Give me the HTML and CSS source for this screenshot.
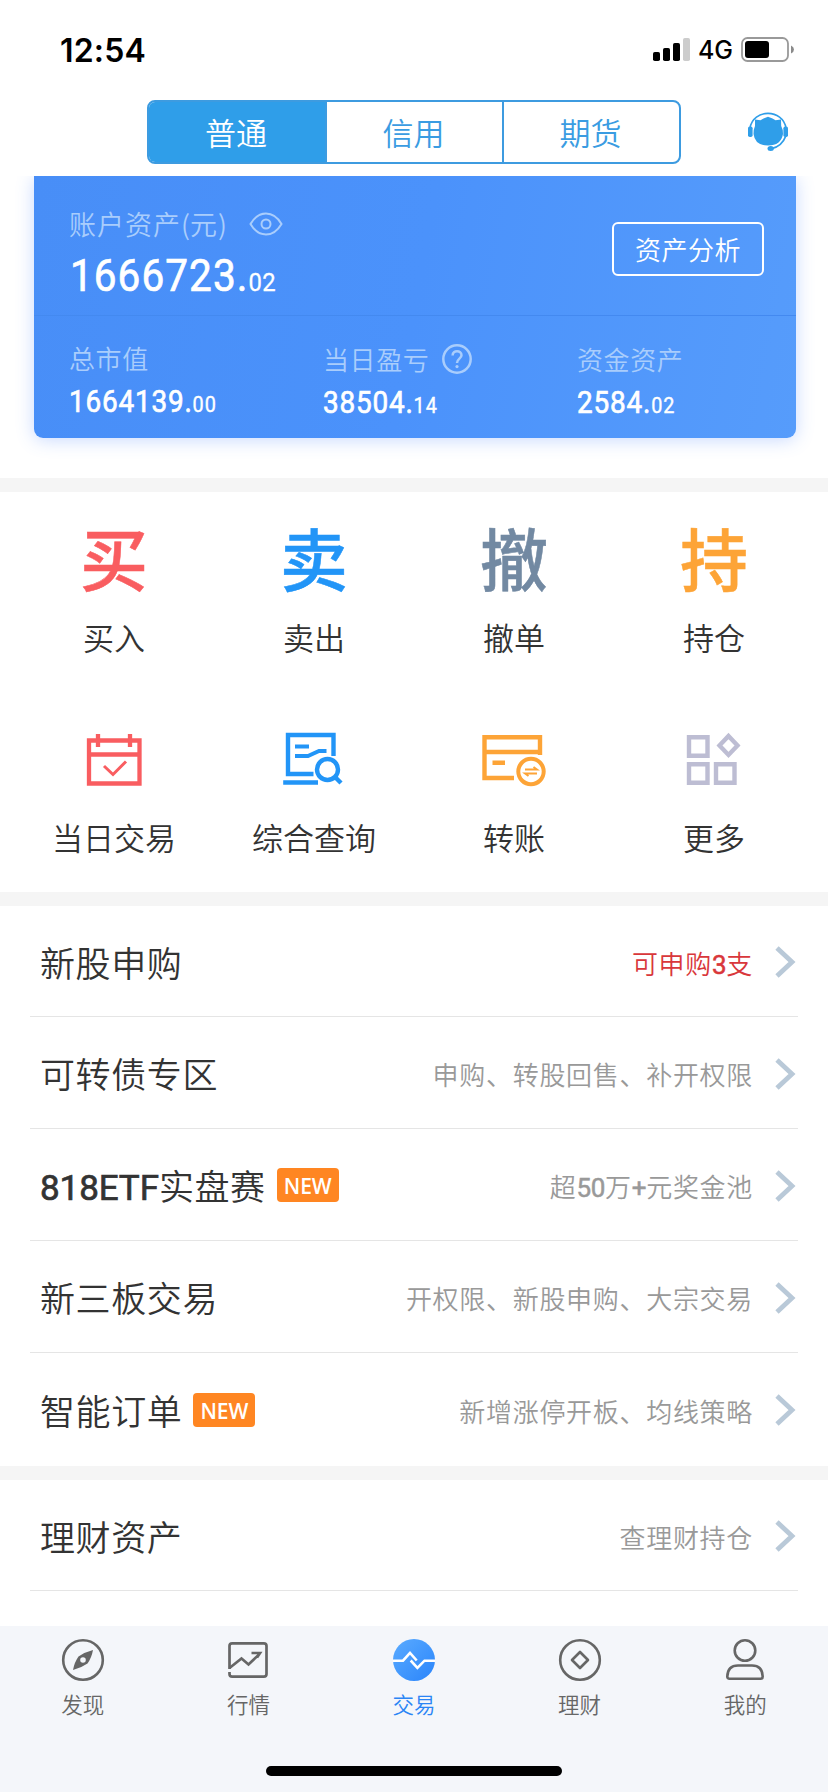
FILE: index.html
```html
<!DOCTYPE html>
<html lang="zh-CN">
<head>
<meta charset="utf-8">
<title>交易</title>
<link rel="stylesheet" href="styles.css">
</head>
<body>
<svg width="0" height="0" class="defs">
  <symbol id="chevron" viewBox="0 0 22 34"><path d="M3 3L18 17L3 31" fill="none" stroke="#b9c9d8" stroke-width="4.800"/></symbol>
</svg>
<div class="screen">
  <header class="status">
    <span class="time">12:54</span>
    <span class="status-right">
      <svg width="38" height="24" viewBox="0 0 38 24">
        <rect x="0" y="14" width="7" height="9" rx="1.8"/><rect x="10" y="10" width="7" height="13" rx="1.8"/><rect x="20" y="5" width="7" height="18" rx="1.8"/><rect x="30" y="0" width="7" height="23" rx="1.8" fill="#ccc"/>
      </svg>
      <span class="net">4G</span>
      <svg class="battery" width="54" height="26" viewBox="0 0 54 26">
        <rect x="1" y="1" width="46" height="23" rx="5.5" fill="none" stroke="#999" stroke-width="1.8"/><rect x="4" y="4" width="24" height="17" rx="3"/><path d="M50 8.500q3 1.300 3 4t-3 4z" fill="#8a8a8a"/>
      </svg>
    </span>
  </header>
  <nav class="top">
    <div class="segments">
      <span class="seg on">普通</span><span class="seg">信用</span><span class="seg">期货</span>
    </div>
    <svg class="service" width="42" height="40" viewBox="0 0 42 40">
      <path d="M3 16C6 -3.500 36 -3.500 39 16" fill="none" stroke="#2f9ee9" stroke-width="1.600"/>
      <rect x="1" y="14.500" width="4.600" height="10.500" rx="1.800" fill="#2f9ee9"/><rect x="36.400" y="14.500" width="4.600" height="10.500" rx="1.800" fill="#2f9ee9"/>
      <path d="M8 7.500L13.500 8.300L16.500 6.500L21 4.800L25.500 6.500L28.500 8.300L34 7.500L34.200 14Q36 17 36 22Q34 33.500 21 33.500Q8 33.500 6.500 22Q6.500 17 8 14Z" fill="#2f9ee9"/>
      <path d="M38.800 24Q35 34.500 24 36.800" fill="none" stroke="#2f9ee9" stroke-width="1.800"/><ellipse cx="23.700" cy="36.600" rx="3.200" ry="2.500" fill="#2f9ee9"/>
    </svg>
  </nav>
  <section class="asset-wrap">
    <div class="card">
      <div class="summary">
        <div>
          <div class="label total-label">账户资产<i>(</i>元<i>)</i>
            <svg class="eye" width="34" height="24" viewBox="0 0 34 24" fill="none" stroke="#a9cdfc" stroke-width="2"><path d="M1.500 12C5 6 10 1.500 17 1.500S29 6 32.500 12C29 18 24 22.500 17 22.500S5 18 1.500 12Z"/><circle cx="17" cy="12" r="4.500"/></svg>
          </div>
          <div class="total"><b>1666723.</b><small>02</small></div>
        </div>
        <span class="analyse">资产分析</span>
      </div>
      <div class="stats">
        <div class="stat first"><div class="label">总市值</div><div class="num"><b>1664139.</b><small>00</small></div></div>
        <div class="stat"><div class="label">当日盈亏
          <svg class="help" width="30" height="30" viewBox="0 0 30 30" fill="none" stroke="#a9cdfc" stroke-width="2.500"><circle cx="15" cy="15" r="13.700"/><path d="M10.600 11.500C10.600 5.700 19.500 5.900 19.500 11.300C19.500 14.700 15 14.700 15 19"/><circle cx="15" cy="22.600" r="1.600" fill="#a9cdfc" stroke="none"/></svg>
        </div><div class="num"><b>38504.</b><small>14</small></div></div>
        <div class="stat"><div class="label">资金资产</div><div class="num"><b>2584.</b><small>02</small></div></div>
      </div>
    </div>
  </section>
  <div class="gap"></div>
  <section class="grid">
    <div class="cell"><span class="glyph red">买</span><span class="name">买入</span></div>
    <div class="cell"><span class="glyph blue">卖</span><span class="name">卖出</span></div>
    <div class="cell"><span class="glyph slate">撤</span><span class="name">撤单</span></div>
    <div class="cell"><span class="glyph amber">持</span><span class="name">持仓</span></div>
    <div class="cell"><span class="pic">
      <svg width="68" height="60" viewBox="0 0 68 60" fill="none" stroke="#f95d60" stroke-width="4.300"><path d="M9 10.500H59.500V53.500H9ZM9 24.500H59M18 4V17M50 4V17"/><path d="M24 36L33 44.500L46 31.500" stroke-width="3"/></svg>
    </span><span class="name">当日交易</span></div>
    <div class="cell"><span class="pic">
      <svg width="68" height="60" viewBox="0 0 68 60" fill="none" stroke="#2295f7" stroke-width="4.400"><path d="M53.500 26V5H8V44H33.500M3.200 52.500H38"/><path d="M15 16.500H29M15 26H28L39 21H46.500" stroke-width="4"/><circle cx="47.500" cy="39.500" r="10.500"/><path d="M54.500 46.500L61 53"/></svg>
    </span><span class="name">综合查询</span></div>
    <div class="cell"><span class="pic">
      <svg width="68" height="60" viewBox="0 0 68 60" fill="none" stroke="#fda437" stroke-width="4.400"><path d="M60 25V7.300H4.500V48H34M4.500 22H60M12.500 32.800H25"/><circle cx="51" cy="41.500" r="12.700" stroke-width="4"/><path d="M45 39.500H57L53.500 37M57 43.500H45L48.500 46" stroke-width="1.900"/></svg>
    </span><span class="name">转账</span></div>
    <div class="cell"><span class="pic">
      <svg width="68" height="60" viewBox="0 0 68 60" fill="none" stroke="#bdbdd3" stroke-width="4.400"><path d="M9 7.200H27.500V25.700H9ZM9 34.300H27.500V52.800H9ZM36 34.300H54.500V52.800H36ZM48.500 5.900L57.500 15.400L48.500 24.900L39.500 15.400Z"/></svg>
    </span><span class="name">更多</span></div>
  </section>
  <div class="gap"></div>
  <section class="list">
    <div class="row"><span class="title">新股申购</span><span class="note hot">可申购<b>3</b>支</span><svg class="chev"><use href="#chevron"/></svg></div>
    <div class="row"><span class="title">可转债专区</span><span class="note">申购、转股回售、补开权限</span><svg class="chev"><use href="#chevron"/></svg></div>
    <div class="row"><span class="title"><b>818ETF</b>实盘赛</span><span class="badge">NEW</span><span class="note">超<b>50</b>万<b>+</b>元奖金池</span><svg class="chev"><use href="#chevron"/></svg></div>
    <div class="row"><span class="title">新三板交易</span><span class="note">开权限、新股申购、大宗交易</span><svg class="chev"><use href="#chevron"/></svg></div>
    <div class="row"><span class="title">智能订单</span><span class="badge">NEW</span><span class="note">新增涨停开板、均线策略</span><svg class="chev"><use href="#chevron"/></svg></div>
  </section>
  <div class="gap"></div>
  <section class="list wealth">
    <div class="row"><span class="title">理财资产</span><span class="note">查理财持仓</span><svg class="chev"><use href="#chevron"/></svg></div>
  </section>
  <footer class="tabbar">
    <div class="tabs">
      <div class="tab"><svg width="44" height="44" viewBox="0 0 44 44"><circle cx="22" cy="22" r="19.800" fill="none" stroke="#666" stroke-width="2.600"/><path fill-rule="evenodd" fill="#666" d="M32 12Q30.500 20 26.500 25.500Q20 30 12 32Q13.500 24 17.500 18.500Q24 14 32 12ZM22 19.200a2.800 2.800 0 1 0 0 5.600a2.800 2.800 0 1 0 0 -5.600Z"/></svg><span>发现</span></div>
      <div class="tab"><svg width="44" height="44" viewBox="0 0 44 44" fill="none" stroke="#666" stroke-width="2.700"><path d="M3.500 31V8Q3.500 5.300 6.200 5.300H37.800Q40.500 5.300 40.500 8V36Q40.500 38.700 37.800 38.700H6.200Q3.500 38.700 3.500 36V34"/><path d="M3.500 30L15.500 20.500L22.500 26.500L33.500 16M25.500 15H34L31 19.500"/></svg><span>行情</span></div>
      <div class="tab active"><svg width="44" height="44" viewBox="0 0 44 44"><defs><linearGradient id="g" x1="0" y1="0" x2="1" y2="1"><stop offset="0" stop-color="#5aabff"/><stop offset="1" stop-color="#2b85fb"/></linearGradient></defs><circle cx="22" cy="22" r="21" fill="url(#g)"/><path d="M1 22.700H11L18 15L24.700 22.500M18.700 22.500L25.400 29.800L32.500 22.700H43" fill="none" stroke="#fff" stroke-width="2.600"/></svg><span>交易</span></div>
      <div class="tab"><svg width="44" height="44" viewBox="0 0 44 44" fill="none" stroke="#666" stroke-width="2.600"><circle cx="22" cy="22" r="19.800"/><path d="M22 14L30 22L22 30L14 22Z" stroke-linejoin="round"/></svg><span>理财</span></div>
      <div class="tab"><svg width="44" height="44" viewBox="0 0 44 44" fill="none" stroke="#666" stroke-width="2.600"><circle cx="22" cy="12.500" r="10.300"/><path d="M15 27.500H29C37 27.500 39.500 33 39.700 38.500Q39.700 40.700 37.500 40.700H6.500Q4.300 40.700 4.300 38.500C4.500 33 7 27.500 15 27.500Z"/></svg><span>我的</span></div>
    </div>
    <div class="home"></div>
  </footer>
</div>
</body>
</html>
```

FILE: styles.css
```css
* { box-sizing: border-box; }
body { margin: 0; background: #fff; color: #333; font-family: "Noto Sans CJK SC", sans-serif; font-weight: 350; }
b, small, i { font-style: normal; }
svg { display: block; flex: none; }
.defs { display: none; }
.screen { width: 828px; height: 1792px; display: flex; flex-direction: column; overflow: hidden; }

.status { height: 100px; flex: none; display: flex; justify-content: space-between; align-items: center; padding: 0 33px 0 60px; color: #000; font-family: Inter, sans-serif; }
.time { font-size: 32px; font-weight: 600; letter-spacing: .2px; }
.status-right { display: flex; align-items: center; }
.net { font-size: 25px; font-weight: 500; margin: 0 8px 0 7px; }

.top { height: 76px; flex: none; display: flex; padding-left: 147px; position: relative; z-index: 1; background: #fff; }
.segments { width: 534px; height: 64px; display: flex; border: 2px solid #3d9be0; border-radius: 8px; overflow: hidden; }
.seg { flex: 1; display: flex; align-items: center; justify-content: center; padding-right: 2px; font-size: 31px; line-height: 60px; color: #3a9ce2; border-left: 2px solid #3d9be0; }
.seg:first-child { border-left: 0; flex: 0 0 176px; }
.seg.on { background: #2f9ee9; color: #fff; }
.service { margin: 12px 0 0 66px; }

.asset-wrap { height: 302px; flex: none; padding: 0 32px 0 34px; }
.card { height: 262px; border-radius: 0 0 9px 9px; background: linear-gradient(100deg, #488ef7, #4b92fb 50%, #569cfb); box-shadow: 0 2px 18px rgba(72, 130, 255, .3); }
.summary { height: 140px; border-bottom: 1px solid #4389f0; display: flex; justify-content: space-between; padding: 0 32px 0 35px; }
.label { height: 38px; display: flex; align-items: center; color: #a9cdfc; font-size: 26px; letter-spacing: .6px; line-height: 38px; }
.total-label { margin-top: 29px; font-size: 27px; letter-spacing: 1px; }
.total-label i { width: 9px; }
.eye { margin-left: 22px; }
.total, .num { color: #fff; font-family: Roboto, sans-serif; font-weight: 400; white-space: nowrap; transform: scaleX(.9); transform-origin: 0 50%; }
.total b, .num b { font-weight: 400; -webkit-text-stroke: .7px #fff; }
.total { font-size: 45px; line-height: 52px; margin-top: 7px; padding-left: 1px; letter-spacing: 1.2px; }
.total small { font-size: 26.500px; letter-spacing: .4px; -webkit-text-stroke: .3px #fff; }
.analyse { width: 152px; height: 54px; margin-top: 46px; border: 2px solid #fff; border-radius: 6px; color: #fff; font-size: 26px; letter-spacing: .5px; line-height: 50px; text-align: center; }
.stats { display: grid; grid-template-columns: 254px 254px 1fr; padding-left: 35px; }
.stat { padding-top: 24px; }
.stat.first { padding-top: 23px; }
.help { margin-left: 13px; }
.num { font-size: 31px; line-height: 36px; margin-top: 7px; letter-spacing: .9px; }
.num small { font-size: 22px; letter-spacing: 1px; -webkit-text-stroke: .4px #fff; }

.gap { height: 14px; flex: none; background: #f5f5f5; }
.grid { height: 400px; flex: none; display: grid; grid-template-columns: repeat(4, 200px); grid-template-rows: 200px 200px; padding: 0 14px; }
.cell { display: flex; flex-direction: column; align-items: center; padding-top: 34px; }
.glyph { height: 68px; line-height: 62px; font-size: 68px; font-weight: 500; -webkit-text-stroke: .5px currentColor; }
.red { color: #f95d60; }
.blue { color: #2295f7; }
.slate { color: #7289a2; }
.amber { color: #fda437; }
.pic { height: 68px; padding-top: 4px; }
.name { margin-top: 20px; font-size: 31px; line-height: 46px; }

.row { height: 112px; margin: 0 30px; padding: 0 0 0 10px; border-bottom: 1px solid #e5e5e5; display: flex; align-items: center; }
.list .row:first-child { height: 111px; }
.list .row:last-child { height: 113px; border-bottom-color: transparent; }
.title { font-size: 35px; letter-spacing: .6px; }
.title b { font-family: Roboto, sans-serif; font-weight: 400; letter-spacing: -.1px; -webkit-text-stroke: .7px #333; }
.note { margin-left: auto; padding-top: 2px; font-size: 26px; letter-spacing: .7px; color: #999; }
.note b { font-family: Roboto, sans-serif; font-weight: 400; letter-spacing: -.3px; -webkit-text-stroke: .5px currentColor; }
.note.hot { color: #d9373b; }
.badge { width: 62px; height: 34px; margin: 1px 0 0 11px; border-radius: 4px; background: #ff8622; color: #fff; font: 600 21px/36px "Open Sans", sans-serif; text-align: center; }
.chev { width: 22px; height: 34px; margin: 2px 2px 0 21px; }
.wealth { height: 146px; flex: none; }
.wealth .row:last-child { height: 111px; border-bottom-color: #e5e5e5; }

.tabbar { flex: 1; background: #f4f6fa; }
.tabs { display: grid; grid-template-columns: repeat(5, 1fr); height: 140px; padding-top: 12px; }
.tab { display: flex; flex-direction: column; align-items: center; color: #666; font-size: 21.500px; line-height: 32px; }
.tab span { margin-top: 6px; }
.tab.active { color: #2b85f5; }
.home { width: 296px; height: 10px; margin: 0 auto; border-radius: 5px; background: #000; }
```
